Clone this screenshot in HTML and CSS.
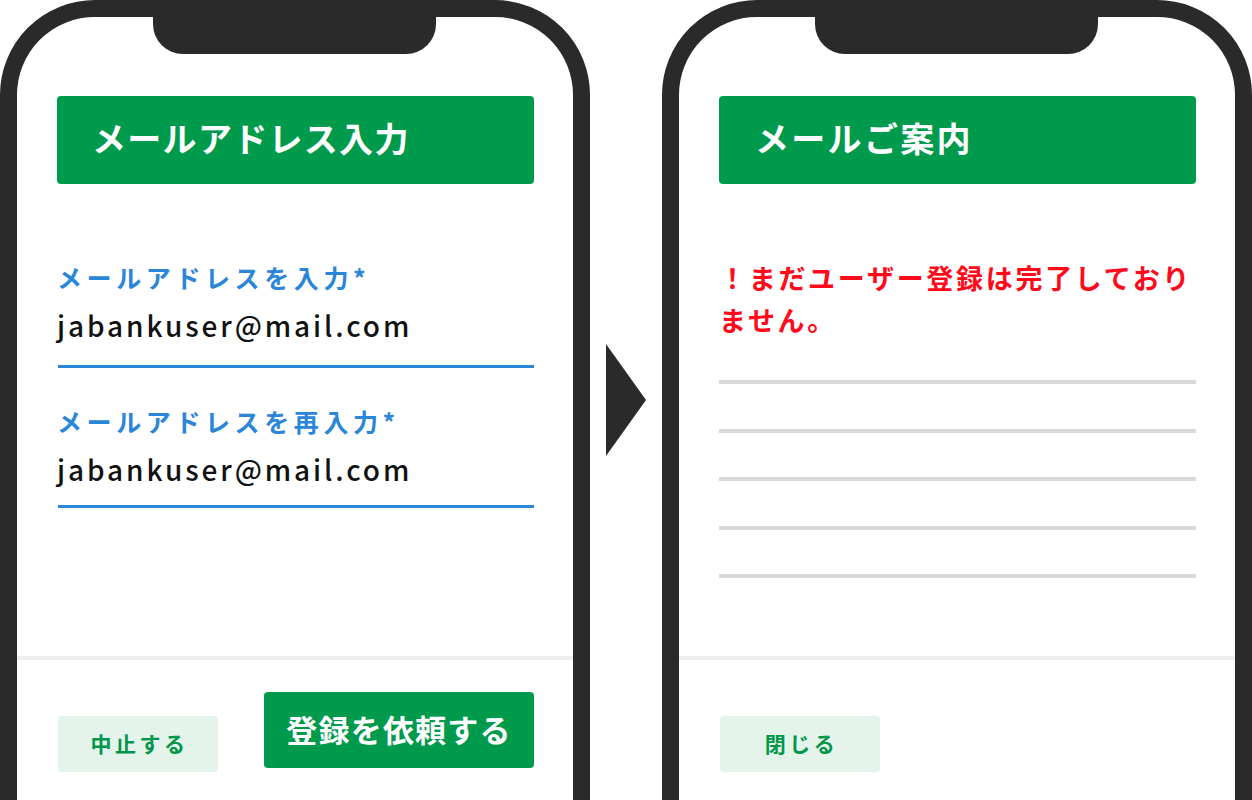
FILE: index.html
```html
<!DOCTYPE html>
<html lang="ja">
<head>
<meta charset="utf-8">
<title>メール登録</title>
<link rel="stylesheet" href="styles.css">
</head>
<body>
<div class="stage">
  <div class="phone">
    <div class="notch"></div>
    <div class="screen">
      <div class="content">
        <div class="title-bar"><span class="title">メールアドレス入力</span></div>
        <div class="field field-first">
          <div class="label">メールアドレスを入力*</div>
          <div class="value">jabankuser@mail.com</div>
          <div class="underline"></div>
        </div>
        <div class="field field-second">
          <div class="label">メールアドレスを再入力*</div>
          <div class="value">jabankuser@mail.com</div>
          <div class="underline underline-second"></div>
        </div>
      </div>
      <div class="divider"></div>
      <div class="footer">
        <div class="btn-sub">中止する</div>
        <div class="btn-main">登録を依頼する</div>
      </div>
    </div>
  </div>

  <div class="arrow-col">
    <svg class="arrow" width="40" height="112" viewBox="0 0 40 112"><polygon points="0,0 40,56 0,112" fill="#2a2a2a"/></svg>
  </div>

  <div class="phone">
    <div class="notch"></div>
    <div class="screen">
      <div class="content">
        <div class="title-bar"><span class="title title-2">メールご案内</span></div>
        <p class="notice">！まだユーザー登録は完了しており<br>ません。</p>
        <div class="rules">
          <div class="rule"></div>
          <div class="rule"></div>
          <div class="rule"></div>
          <div class="rule"></div>
          <div class="rule"></div>
        </div>
      </div>
      <div class="divider"></div>
      <div class="footer">
        <div class="btn-sub">閉じる</div>
      </div>
    </div>
  </div>
</div>
</body>
</html>
```

FILE: styles.css
```css
html, body {
  margin: 0;
  padding: 0;
  background: #ffffff;
}
body {
  width: 1252px;
  height: 800px;
  overflow: hidden;
  font-family: "Noto Sans CJK JP", "Noto Sans", sans-serif;
}
.stage {
  display: flex;
  align-items: flex-start;
  width: 1252px;
}
.phone {
  position: relative;
  box-sizing: border-box;
  width: 590px;
  height: 900px;
  border: 17px solid #2a2a2a;
  border-radius: 95px;
  background: #ffffff;
  flex: none;
}
.notch {
  position: absolute;
  top: -17px;
  left: 136px;
  width: 283px;
  height: 54px;
  background: #2a2a2a;
  border-radius: 0 0 30px 30px;
}
.screen {
  display: flex;
  flex-direction: column;
}
.content {
  box-sizing: border-box;
  height: 639px;
  padding: 79px 39px 0 40px;
}
.title-bar {
  box-sizing: border-box;
  height: 88px;
  background: #009a4c;
  border-radius: 4px;
  display: flex;
  align-items: center;
  padding: 0 0 4px 35px;
}
.title {
  color: #ffffff;
  font-weight: 700;
  font-size: 34px;
  letter-spacing: 1.3px;
  line-height: 40px;
}
.title-2 {
  padding-left: 1px;
  letter-spacing: 2.3px;
}
.field-first {
  margin-top: 75px;
}
.field-second {
  margin-top: 35px;
}
.label {
  color: #2a86d9;
  font-weight: 700;
  font-size: 25px;
  letter-spacing: 4.6px;
  line-height: 36px;
  white-space: nowrap;
}
.value {
  margin-top: 10px;
  color: #111111;
  font-weight: 500;
  font-size: 28px;
  letter-spacing: 2.9px;
  line-height: 40px;
  white-space: nowrap;
}
.underline {
  margin: 20px 0 0 1px;
  height: 3px;
  background: #2a86d9;
}
.underline-second {
  margin-top: 16px;
}
.notice {
  margin: 73px 0 0 0;
  color: #ff0a1a;
  font-weight: 700;
  font-size: 27px;
  letter-spacing: 2.7px;
  line-height: 42px;
  white-space: nowrap;
}
.rules {
  display: flex;
  flex-direction: column;
  gap: 44.5px;
  margin-top: 39px;
}
.rule {
  height: 4px;
  background: #d9d9d9;
}
.divider {
  height: 4px;
  background: #efefef;
}
.footer {
  display: flex;
  align-items: flex-start;
  gap: 46px;
  padding-left: 41px;
}
.btn-sub {
  margin-top: 56px;
  width: 160px;
  height: 56px;
  border-radius: 4px;
  background: #e4f4eb;
  color: #00964a;
  font-weight: 700;
  font-size: 21px;
  letter-spacing: 3.5px;
  display: flex;
  align-items: center;
  justify-content: center;
  padding: 0 0 2px 3px;
  box-sizing: border-box;
}
.btn-main {
  margin-top: 32px;
  width: 270px;
  height: 76px;
  border-radius: 4px;
  background: #009a4c;
  color: #ffffff;
  font-weight: 700;
  font-size: 31px;
  letter-spacing: 1.2px;
  display: flex;
  align-items: center;
  justify-content: center;
  padding-bottom: 4px;
  box-sizing: border-box;
}
.arrow-col {
  width: 72px;
  flex: none;
  display: flex;
  justify-content: center;
  padding-top: 344px;
}
.arrow {
  display: block;
}
```
